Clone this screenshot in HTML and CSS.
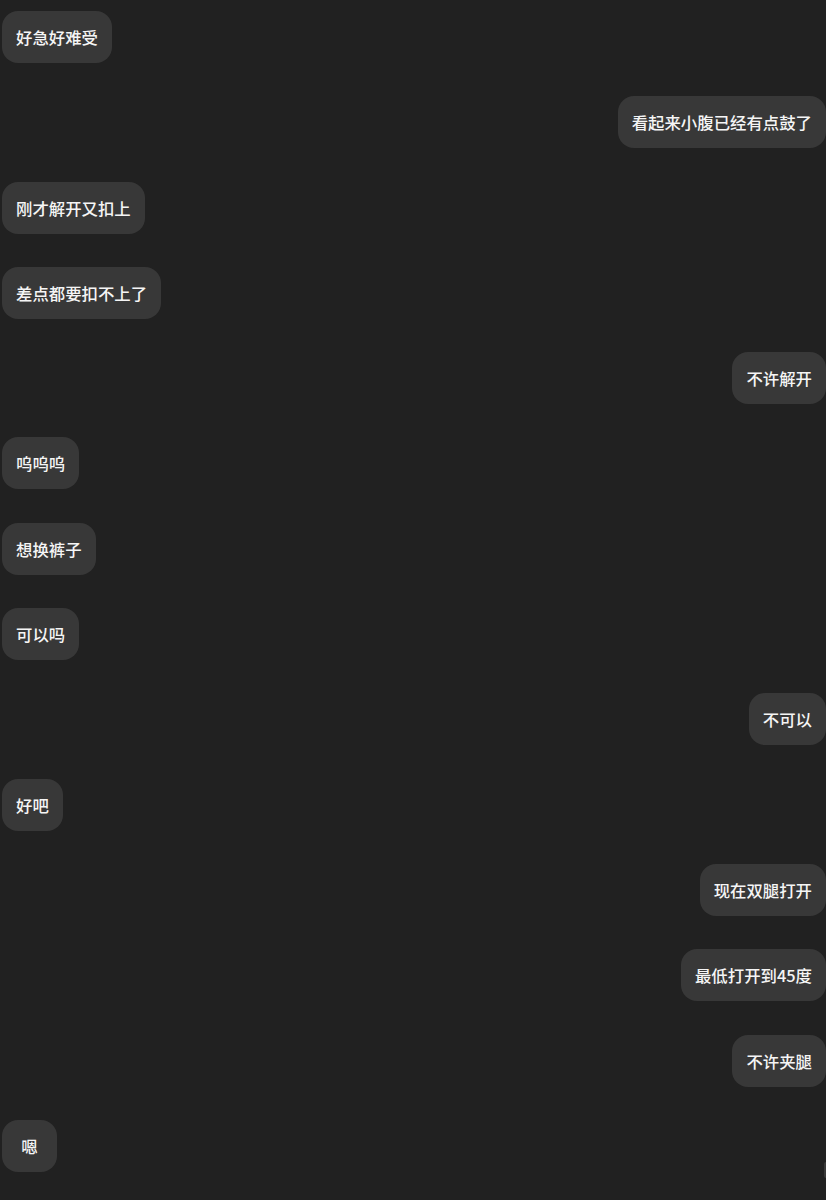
FILE: index.html
```html
<!DOCTYPE html>
<html lang="zh-CN">
<head>
    <meta charset="UTF-8">
    <meta name="viewport" content="width=device-width, initial-scale=1.0">
    <title>聊天记录</title>
    <link rel="stylesheet" href="styles.css">
</head>
<body>
    <div class="chat">
        <div class="msg them">好急好难受</div>
        <div class="msg me">看起来小腹已经有点鼓了</div>
        <div class="msg them">刚才解开又扣上</div>
        <div class="msg them">差点都要扣不上了</div>
        <div class="msg me">不许解开</div>
        <div class="msg them">呜呜呜</div>
        <div class="msg them">想换裤子</div>
        <div class="msg them">可以吗</div>
        <div class="msg me">不可以</div>
        <div class="msg them">好吧</div>
        <div class="msg me">现在双腿打开</div>
        <div class="msg me">最低打开到45度</div>
        <div class="msg me">不许夹腿</div>
        <div class="msg them">嗯</div>
    </div>
    <div class="scroll-edge"></div>
</body>
</html>
```

FILE: styles.css
```css
html, body {
    margin: 0;
    background-color: #212121;
}

body {
    font-family: "Noto Sans CJK SC", "Noto Sans", sans-serif;
    overflow: hidden;
}

.chat {
    display: flex;
    flex-direction: column;
    gap: 33.3px;
    padding: 11px 0 0 2px;
}

.msg {
    background-color: #383838;
    color: #f5f5f5;
    font-size: 16.4px;
    font-weight: 500;
    line-height: 24px;
    padding: 14px;
    border-radius: 16px;
    max-width: 70%;
    min-width: 27px;
    text-align: center;
}

.them {
    align-self: flex-start;
}

.me {
    align-self: flex-end;
}

/* edge of the next bubble peeking in at the bottom right */
.scroll-edge {
    position: absolute;
    right: 0;
    top: 1162px;
    width: 2px;
    height: 16px;
    border-radius: 2px 0 0 2px;
    background-color: #3a3a3a;
}
```
